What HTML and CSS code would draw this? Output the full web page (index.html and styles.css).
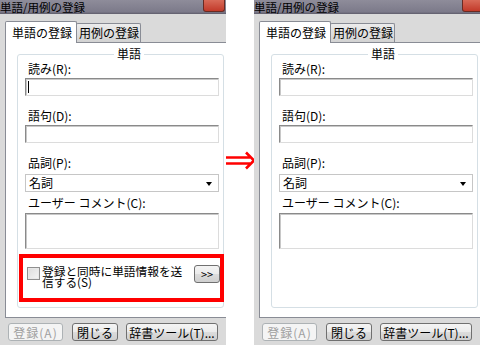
FILE: index.html
```html
<!DOCTYPE html>
<html lang="ja">
<head>
    <meta charset="UTF-8">
    <meta name="viewport" content="width=device-width, initial-scale=1.0">
    <link rel="stylesheet" href="styles.css">
</head>
<body>
    <div class="compare">
        <div class="dialog dialog-before">
            <div class="titlebar">
                <span class="title">単語/用例の登録</span>
                <span class="close"></span>
            </div>
            <div class="window-body">
                <div class="tabs">
                    <div class="tab active">単語の登録</div>
                    <div class="tab">用例の登録</div>
                </div>
                <div class="panel">
                    <div class="group">
                        <div class="legend">単語</div>
                        <div class="field-label first">読み(R):</div>
                        <div class="textbox"><span class="caret"></span></div>
                        <div class="field-label">語句(D):</div>
                        <div class="textbox"></div>
                        <div class="field-label">品詞(P):</div>
                        <div class="combo"><span>名詞</span><span class="combo-arrow"></span></div>
                        <div class="field-label small-gap">ユーザー コメント(C):</div>
                        <div class="textbox memo"></div>
                        <div class="highlight">
                            <span class="checkbox"></span>
                            <span class="send-text">登録と同時に単語情報を送信する(S)</span>
                            <span class="btn more">&gt;&gt;</span>
                        </div>
                    </div>
                </div>
                <div class="buttons">
                    <span class="btn disabled">登録(A)</span>
                    <span class="btn close-btn">閉じる</span>
                    <span class="btn tools">辞書ツール(T)...</span>
                </div>
            </div>
        </div>

        <div class="arrow">
            <svg width="30" height="20" viewBox="0 0 30 20">
                <path d="M0 6.5 H24 M0 12.5 H24 M20 1.5 L28 9.5 L20 17.5" fill="none" stroke="#f00" stroke-width="2.6"/>
            </svg>
        </div>

        <div class="dialog dialog-after">
            <div class="titlebar">
                <span class="title">単語/用例の登録</span>
                <span class="close"></span>
            </div>
            <div class="window-body">
                <div class="tabs">
                    <div class="tab active">単語の登録</div>
                    <div class="tab">用例の登録</div>
                </div>
                <div class="panel">
                    <div class="group">
                        <div class="legend">単語</div>
                        <div class="field-label first">読み(R):</div>
                        <div class="textbox"></div>
                        <div class="field-label">語句(D):</div>
                        <div class="textbox"></div>
                        <div class="field-label">品詞(P):</div>
                        <div class="combo"><span>名詞</span><span class="combo-arrow"></span></div>
                        <div class="field-label small-gap">ユーザー コメント(C):</div>
                        <div class="textbox memo"></div>
                    </div>
                </div>
                <div class="buttons">
                    <span class="btn disabled">登録(A)</span>
                    <span class="btn close-btn">閉じる</span>
                    <span class="btn tools">辞書ツール(T)...</span>
                </div>
            </div>
        </div>
    </div>
</body>
</html>
```

FILE: styles.css
```css
body {
    margin: 0;
    padding: 0;
    background: #fff;
    font-family: 'Noto Sans CJK JP', 'Liberation Sans', sans-serif;
    font-size: 12px;
    color: #000;
}

.compare {
    display: flex;
    width: 480px;
    height: 345px;
    overflow: hidden;
}

.dialog {
    width: 226px;
    height: 345px;
    flex-shrink: 0;
    overflow: hidden;
    background: #dadada;
}

.arrow {
    width: 28px;
    flex-shrink: 0;
    padding-top: 151px;
}

.arrow svg {
    display: block;
}

.titlebar {
    height: 14px;
    display: flex;
    align-items: flex-start;
    background: linear-gradient(#8e8c9a, #7c7a8a 85%, #5e5c6a 100%);
}

.title {
    font-size: 11.5px;
    line-height: 15px;
    height: 14px;
    white-space: nowrap;
}

.close {
    margin-left: auto;
    margin-right: 1px;
    width: 20px;
    height: 11px;
    border: 1px solid #6a2a22;
    border-top: none;
    border-radius: 0 0 3px 3px;
    background: linear-gradient(#d86a58, #c23a2a);
}

.dialog-after .close {
    margin-right: -4px;
}

.window-body {
    padding: 7px 0 0 5px;
}

.tabs {
    display: flex;
    align-items: flex-end;
    height: 21px;
}

.tab {
    height: 19px;
    line-height: 18px;
    padding: 0 2px;
    border: 1px solid #898c95;
    border-bottom: none;
    border-radius: 2px 2px 0 0;
    background: linear-gradient(#ececec, #d2d2d2);
    white-space: nowrap;
    box-sizing: border-box;
}

.tab.active {
    height: 22px;
    margin-bottom: -1px;
    padding: 2px 6px 0 6px;
    background: #fff;
    position: relative;
    z-index: 1;
    width: 72px;
}

.tab + .tab {
    margin-left: -1px;
    width: 65px;
}

.panel {
    width: 260px;
    height: 276px;
    border: 1px solid #898c95;
    background: #fff;
    padding: 11px 0 0 11px;
    box-sizing: border-box;
}

.group {
    width: 207px;
    height: 254px;
    box-sizing: border-box;
    border: 1px solid #d5dfe5;
    border-radius: 3px;
    padding: 0 0 0 7px;
}

.legend {
    width: fit-content;
    margin: -8px auto 0;
    padding: 0 3px;
    background: #fff;
    line-height: 14px;
    position: relative;
    left: 5px;
}

.field-label {
    line-height: 14px;
    margin-top: 12px;
    padding-left: 3px;
    white-space: nowrap;
}

.field-label.first {
    margin-top: 1px;
}

.field-label.small-gap {
    margin-top: 4px;
}

.textbox {
    width: 194px;
    height: 18px;
    margin-top: 2px;
    box-sizing: border-box;
    border: 1px solid;
    border-color: #8a8a8a #dcdcdc #dcdcdc #8a8a8a;
    box-shadow: inset 1px 1px 0 #c8c8c8;
    background: #fff;
    padding: 2px 0 0 2px;
}

.textbox + .field-label {
    margin-top: 13px;
}

.caret {
    display: block;
    width: 1px;
    height: 12px;
    background: #000;
}

.combo {
    width: 194px;
    height: 18px;
    margin-top: 4px;
    box-sizing: border-box;
    border: 1px solid #c6c6c6;
    display: flex;
    align-items: center;
    justify-content: space-between;
    padding: 0 6px 0 3px;
    line-height: 16px;
}

.combo-arrow {
    width: 0;
    height: 0;
    border-left: 3.5px solid transparent;
    border-right: 3.5px solid transparent;
    border-top: 4px solid #000;
    margin-top: 2px;
}

.textbox.memo {
    height: 36px;
    margin-top: 3px;
}

.highlight {
    width: 205px;
    height: 48px;
    margin: 5px 0 0 -6px;
    box-sizing: border-box;
    border: 4px solid #f00;
    display: flex;
    align-items: flex-start;
    padding: 5px 0 0 4px;
    position: relative;
}

.checkbox {
    width: 13px;
    height: 13px;
    margin-top: 4px;
    box-sizing: border-box;
    border: 1px solid #8f8f8f;
    background: linear-gradient(135deg, #dcdcdc, #f4f4f4);
    box-shadow: inset 0 0 0 1px #e8e8e8;
    flex-shrink: 0;
}

.send-text {
    width: 146px;
    margin-left: 2px;
    line-height: 11px;
    font-size: 11.7px;
    margin-top: 2px;
}

.btn {
    display: flex;
    align-items: center;
    justify-content: center;
    height: 18px;
    box-sizing: border-box;
    border: 1px solid #707070;
    border-radius: 3px;
    background: linear-gradient(#f4f4f4 0%, #ebebeb 50%, #dcdcdc 51%, #cfcfcf 100%);
    white-space: nowrap;
}

.btn.more {
    width: 26px;
    margin-left: 6px;
    margin-top: 2px;
    font-size: 11px;
}

.buttons {
    display: flex;
    margin-top: 5px;
    padding-left: 3px;
}

.btn.disabled {
    width: 55px;
    color: #a0a0a0;
    border-color: #adb2b5;
    background: #f4f4f4;
    letter-spacing: 1px;
}

.btn.close-btn {
    width: 46px;
    margin-left: 9px;
}

.btn.tools {
    width: 92px;
    margin-left: 8px;
}
```
